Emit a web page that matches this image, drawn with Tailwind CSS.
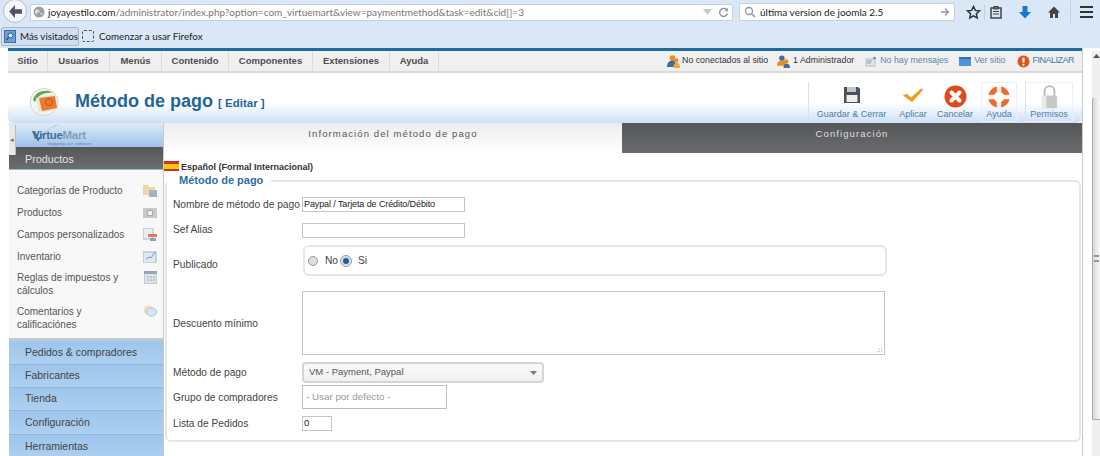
<!DOCTYPE html>
<html lang="es">
<head>
<meta charset="utf-8">
<title>Método de pago</title>
<script src="https://cdn.jsdelivr.net/npm/@tailwindcss/browser@4"></script>
</head>
<body class="w-[1100px] h-[456px] overflow-hidden bg-white font-['Liberation_Sans',Arial,sans-serif] text-[10px] text-[#444]">
<!-- Browser chrome -->
<div class="h-[48px] bg-[#d9e7f6] flex flex-col">
  <div class="h-[24px] flex items-center relative pl-[30px]">
    <div class="absolute left-[3px] top-[-1px] w-[24px] h-[24px] rounded-full bg-[#f5f7fa] border border-[#aebccb] flex items-center justify-center">
      <svg width="15" height="13" viewBox="0 0 14 12"><path d="M6.500 0 1 6l5.500 6V8H13V4H6.500z" fill="#4a5560"/></svg>
    </div>
    <div class="w-[703px] h-[17px] bg-white border border-[#c3d0de] rounded-r-[2px] flex items-center font-['Lato',sans-serif] text-[10px] text-[#777] whitespace-nowrap">
      <svg width="12" height="12" viewBox="0 0 12 12" class="ml-[2px] mr-[3px] shrink-0"><circle cx="6" cy="6" r="5.500" fill="#9aa0a6"/><path d="M3 3.500c2-1 2 1 3 1s1 2-1 2-1 3-2 2-1-3-1-3zM7.500 7c1-.5 2-.5 2 .5s-1 2-1.500 1.500z" fill="#dcdfe2"/></svg>
      <span class="text-[#222]">joyayestilo.com</span><span>/administrator/index.php?option=com_virtuemart&amp;view=paymentmethod&amp;task=edit&amp;cid[]=3</span>
      <div class="ml-auto flex items-center gap-[6px] pr-[3px]">
        <svg width="9" height="6" viewBox="0 0 9 6"><path d="M0 0h9L4.500 6z" fill="#c4ccd3"/></svg>
        <svg width="11" height="11" viewBox="0 0 11 11"><path d="M9 3.200A4 4 0 1 0 9.500 6.500" fill="none" stroke="#8a939b" stroke-width="1.400"/><path d="M9.800.800v3.400H6.400z" fill="#8a939b"/></svg>
      </div>
    </div>
    <div class="ml-[6px] w-[216px] h-[18px] bg-white border border-[#c3d0de] rounded-[2px] flex items-center pl-[4px] pr-[4px] font-['Lato',sans-serif] text-[10px] text-[#222] whitespace-nowrap">
      <svg width="12" height="12" viewBox="0 0 12 12" class="mr-[4px] shrink-0"><circle cx="5" cy="5" r="3.500" fill="none" stroke="#8d959c" stroke-width="1.300"/><path d="m7.700 7.700 3.300 3.300" stroke="#8d959c" stroke-width="1.600"/></svg>
      última version de joomla 2.5
      <svg width="10" height="10" viewBox="0 0 10 10" class="ml-auto"><path d="M1 5h7M5 1.500 8.500 5 5 8.500" fill="none" stroke="#8d959c" stroke-width="1.300"/></svg>
    </div>
    <div class="ml-[11px] flex items-center">
      <svg width="15" height="15" viewBox="0 0 15 15"><path d="m7.500 1.500 1.800 3.900 4.200.5-3.100 2.900.8 4.200-3.700-2.100-3.700 2.100.8-4.200L1.500 5.900l4.200-.5z" fill="none" stroke="#333" stroke-width="1.500"/></svg>
      <div class="w-[1px] h-[15px] bg-[#c3d0de] ml-[3px] mr-[4px]"></div>
      <svg width="14" height="14" viewBox="0 0 14 14"><rect x="2" y="3" width="10" height="10" fill="none" stroke="#444" stroke-width="1.500"/><path d="M5 1.500h4V4H5zM4 6.500h6M4 9h6" fill="none" stroke="#444" stroke-width="1.200"/></svg>
      <svg width="14" height="14" viewBox="0 0 14 14" class="ml-[15px]"><path d="M4.500 1h5v6H13l-6 6.500L1 7h3.500z" fill="#1c78c8"/></svg>
      <svg width="14" height="14" viewBox="0 0 14 14" class="ml-[15px]"><path d="M7 1.500 1 7.500h2V13h3V9h2v4h3V7.500h2z" fill="#444"/></svg>
      <div class="w-[1px] h-[22px] bg-[#c3d0de] ml-[9px] mr-[9px]"></div>
      <div class="flex flex-col gap-[2.500px]"><div class="w-[13px] h-[2.500px] bg-[#333]"></div><div class="w-[13px] h-[2.500px] bg-[#333]"></div><div class="w-[13px] h-[2.500px] bg-[#333]"></div></div>
    </div>
  </div>
  <div class="h-[24px] flex items-center font-['Lato',sans-serif] text-[9.800px] text-[#222]">
    <div class="ml-[1px] h-[19px] w-[78px] shrink-0 bg-[#cfdff0] border border-[#a6b8cb] rounded-[2px] flex items-center pl-[2px] gap-[4px] whitespace-nowrap">
      <svg width="12" height="13" viewBox="0 0 12 13" class="shrink-0"><rect x=".5" y=".5" width="11" height="12" fill="#6f9fd8" stroke="#3e6ea8"/><circle cx="6.500" cy="5.500" r="2.500" fill="#e8f2fb" stroke="#24508a"/><path d="M4.500 7.500 2.500 10" stroke="#24508a" stroke-width="1.300"/></svg>
      Más visitados
    </div>
    <div class="ml-[3px] w-[12px] h-[12px] border border-dashed border-[#555] rounded-[2px]"></div>
    <span class="ml-[5px] whitespace-nowrap">Comenzar a usar Firefox</span>
  </div>
</div>

<div class="h-[408px] flex">
  <!-- Admin page -->
  <div class="ml-[8px] w-[1075px] border-r border-[#c9c9c9] flex flex-col">
    <div class="h-[3px] shrink-0 bg-[#1d6a9f]"></div>
    <!-- top menu -->
    <div class="h-[22px] shrink-0 bg-[#f0f0f0] border-b-2 border-[#d9d9d9] flex items-center justify-between">
      <div class="flex h-full font-bold text-[#4d4d4d] text-[9.500px]">
        <span class="w-[40px] flex items-center justify-center border-r border-[#dcdcdc]">Sitio</span>
        <span class="w-[62px] flex items-center justify-center border-r border-[#dcdcdc]">Usuarios</span>
        <span class="w-[52px] flex items-center justify-center border-r border-[#dcdcdc]">Menús</span>
        <span class="w-[67px] flex items-center justify-center border-r border-[#dcdcdc]">Contenido</span>
        <span class="w-[84px] flex items-center justify-center border-r border-[#dcdcdc]">Componentes</span>
        <span class="w-[77px] flex items-center justify-center border-r border-[#dcdcdc]">Extensiones</span>
        <span class="w-[49px] flex items-center justify-center border-r border-[#dcdcdc]">Ayuda</span>
      </div>
      <div class="flex items-center pr-[8px] text-[8.800px] whitespace-nowrap">
        <svg width="13" height="13" viewBox="0 0 12 12" class="mr-[2px]"><circle cx="5" cy="2.800" r="2.500" fill="#f08a1d"/><path d="M0 11c0-4 2-6 5-6s3 2 3 6z" fill="#3a6ea5"/><circle cx="8.500" cy="5" r="2" fill="#f08a1d"/><path d="M6 12c0-3 1-5 3-5s3 2 3 5z" fill="#f6a33c"/></svg>
        <span class="text-[#333]">No conectados al sitio</span>
        <svg width="13" height="13" viewBox="0 0 12 12" class="ml-[9px] mr-[3px]"><circle cx="4.500" cy="3" r="2.500" fill="#3a6ea5"/><path d="M0 10c0-4 2-5 5-5s3 2 3 5z" fill="#f08a1d"/><circle cx="8.500" cy="6" r="2" fill="#f08a1d"/><path d="M6 12c0-3 1-4 3-4s3 1 3 4z" fill="#3a6ea5"/></svg>
        <span class="text-[#333]">1 Administrador</span>
        <svg width="12" height="11" viewBox="0 0 12 11" class="ml-[11px] mr-[3px]"><rect x="1" y="3" width="9" height="7" fill="#e4e8ec" stroke="#b4bcc4"/><path d="M2 5h5M2 7h4" stroke="#8d98a3"/><path d="M8 1h3v2H8z" fill="#6aa0d8"/></svg>
        <span class="text-[#5b86ad]">No hay mensajes</span>
        <svg width="12" height="9" viewBox="0 0 12 9" class="ml-[11px] mr-[3px]"><rect width="12" height="9" fill="#4e93d6"/><rect width="12" height="2" fill="#2f6fae"/></svg>
        <span class="text-[#5b86ad]">Ver sitio</span>
        <svg width="13" height="13" viewBox="0 0 12 12" class="ml-[12px] mr-[2px]"><circle cx="6" cy="6" r="5.500" fill="#e2501c"/><path d="M6 2.500v4.500" stroke="#fff" stroke-width="2"/><circle cx="6" cy="9" r="1" fill="#fff"/></svg>
        <span class="text-[#3f78ab] text-[9px] tracking-[-0.500px]">FINALIZAR</span>
      </div>
    </div>
    <!-- title header -->
    <div class="h-[50px] shrink-0 bg-gradient-to-b from-white from-60% to-[#cce0f6] rounded-b-[6px] flex items-center relative">
      <div class="ml-[21px] mt-[8px]">
        <svg width="32" height="30" viewBox="0 0 32 30"><ellipse cx="15" cy="15" rx="14" ry="13.500" fill="#f4f4f0" stroke="#d4d4cc"/><path d="M4 13C6 6 12 3 20 4l4 2C16 5 9 8 6 15z" fill="#5cab55"/><path d="M7 11 25 7l4 16-19 3z" fill="#e9e5da"/><path d="M10 11 26 9l2 12-15 3z" fill="#ec7a2f"/><circle cx="20" cy="15" r="3.500" fill="none" stroke="#c5521a"/></svg>
      </div>
      <h1 class="ml-[14px] mt-[7px] text-[18px] font-bold text-[#1f659d] whitespace-nowrap">Método de pago <span class="text-[11.500px]">[ Editar ]</span></h1>
      <div class="ml-auto flex h-[40px] self-start mt-[9px] mr-[9px] text-[#4b7ba8] text-[9px] leading-[11px]">
        <div class="w-[86px] flex flex-col items-center justify-end pb-[2px] whitespace-nowrap border-l border-[#dbe0e5]">
          <svg width="18" height="18" viewBox="0 0 18 18" class="mb-[5px]"><path d="M1 1h14l2 2v14H1z" fill="#4a4f58"/><rect x="4" y="1" width="9" height="5" fill="#c2c5c9"/><rect x="3.500" y="9" width="11" height="7" fill="#eceded"/></svg>
          Guardar &amp; Cerrar
        </div>
        <div class="w-[38px] flex flex-col items-center justify-end pb-[2px]">
          <svg width="22" height="20" viewBox="0 0 24 19" class="mb-[3px]"><path d="M1 9l4-2 5 4L21 1l2 2-12 13z" fill="#f39a1e"/></svg>
          Aplicar
        </div>
        <div class="w-[46px] flex flex-col items-center justify-end pb-[2px]">
          <svg width="23" height="23" viewBox="0 0 23 23" class="mb-[1px]"><circle cx="11.500" cy="11.500" r="11" fill="#df4a1c"/><path d="M7.500 7.500l8 8m0-8-8 8" stroke="#fff" stroke-width="4" stroke-linecap="round"/></svg>
          Cancelar
        </div>
        <div class="ml-[3px] w-[36px] flex flex-col items-center justify-end pb-[1px] border border-[#e8eff7]">
          <svg width="22" height="22" viewBox="0 0 22 22" class="mb-[1px]"><circle cx="11" cy="11" r="8" fill="none" stroke="#ec6a2c" stroke-width="5.500"/><path d="M11 0v6M11 16v6M0 11h6M16 11h6" stroke="#f6f2ee" stroke-width="4.500"/></svg>
          Ayuda
        </div>
        <div class="ml-[8px] w-[48px] flex flex-col items-center justify-end pb-[1px] border border-[#e8eff7] border-l-[#dbe0e5]">
          <svg width="17" height="25" viewBox="0 0 19 26"><path d="M4 13V7a5.500 5.500 0 0 1 11 0v6" fill="none" stroke="#b8b8b8" stroke-width="2"/><rect x="1" y="12" width="17" height="14" rx="1.500" fill="#c8c8c4"/><rect x="1" y="12" width="5" height="14" fill="#eaeae6"/></svg>
          Permisos
        </div>
      </div>
    </div>
    <!-- body -->
    <div class="h-[333px] flex min-h-0 overflow-hidden">
      <!-- sidebar -->
      <aside class="w-[155px] ml-[1px] shrink-0 border-r border-[#c8c8c8] flex flex-col relative overflow-hidden">
        <div class="absolute z-10 left-0 top-[2px] w-[7px] h-[30px] bg-[#e9e9e9] border-r border-[#bbb] flex items-center justify-center text-[7px] text-[#666]">◂</div>
        <div class="h-[24px] shrink-0 relative bg-gradient-to-b from-[#dfeaf6] to-[#9cc3ea] pl-[23px] pt-[5px] font-bold text-[11.500px] leading-[14px] text-[#3f6f9c] tracking-[-0.3px] whitespace-nowrap">Virtue<span class="text-[#7f9fc0]">Mart</span>
          <svg width="30" height="19" viewBox="0 0 30 19" class="absolute left-[23px] top-[1px]"><path d="M1 7l5 11C10 10 18 3 28 0 18 4 11 9 6.500 14L3 7z" fill="#3f6f9c"/></svg>
          <span class="absolute left-[38px] top-[18px] text-[4px] leading-[5px] font-normal tracking-[0.2px] text-[#5a7a99]">shopping cart software</span>
        </div>
        <div class="h-[23px] shrink-0 bg-gradient-to-b from-[#555658] to-[#6c6d70] border-b border-[#9bb] pl-[16px] pt-[2px] flex items-center text-[10.800px] text-[#e2e2e2]">Productos</div>
        <div class="h-[170px] shrink-0 bg-[#f8f8f8] border-b-2 border-[#c9c9c9] pl-[8px] pr-[6px] pt-[14px] text-[10px] leading-[13px] text-[#555] flex flex-col">
          <div class="h-[22px] shrink-0 flex justify-between items-start"><span>Categorías de Producto</span>
            <svg width="14" height="13" viewBox="0 0 14 13"><path d="M0 1h5l1 2h6v8H0z" fill="#f0d5a0"/><rect x="6" y="6" width="8" height="7" fill="#9eb4c8"/></svg></div>
          <div class="h-[22px] shrink-0 flex justify-between items-start"><span>Productos</span>
            <svg width="14" height="12" viewBox="0 0 14 12"><rect y="2" width="14" height="10" fill="#c9c9c9"/><circle cx="7" cy="7" r="3" fill="#eee" stroke="#999"/></svg></div>
          <div class="h-[22px] shrink-0 flex justify-between items-start"><span>Campos personalizados</span>
            <svg width="14" height="13" viewBox="0 0 14 13"><rect width="10" height="11" fill="#e8eef4" stroke="#b0bcc8"/><path d="M5 6h9v3H5z" fill="#e77b4b"/><path d="M7 10h6v3H7z" fill="#7ba6d0"/></svg></div>
          <div class="h-[21px] shrink-0 flex justify-between items-start"><span>Inventario</span>
            <svg width="14" height="13" viewBox="0 0 14 13"><rect y="2" width="13" height="11" fill="#dfeaf5" stroke="#9ab6d2"/><path d="M3 9l3-2 2 1 4-6" fill="none" stroke="#7b93aa"/></svg></div>
          <div class="h-[34px] shrink-0 flex justify-between items-start"><span>Reglas de impuestos y<br>cálculos</span>
            <svg width="13" height="13" viewBox="0 0 13 13"><rect width="13" height="13" fill="#dfe4ea" stroke="#a8b2bc"/><rect width="13" height="3" fill="#8ea7bf"/><path d="M3 6h2M6 6h2M9 6h2M3 9h2M6 9h2M9 9h2" stroke="#9aa5b0"/></svg></div>
          <div class="flex justify-between items-start"><span>Comentarios y<br>calificaciónes</span>
            <svg width="14" height="13" viewBox="0 0 14 13"><ellipse cx="5.500" cy="5" rx="5" ry="4.500" fill="#f3dcb0"/><ellipse cx="8.500" cy="7" rx="5" ry="4" fill="#d5e7f6" stroke="#8fb6da" stroke-width=".7"/></svg></div>
        </div>
        <div class="flex-1 pt-[2px] bg-[#a6c9ec] text-[10.500px] text-[#444] flex flex-col">
          <div class="h-[23px] shrink-0 pl-[16px] flex items-center border-b border-[#8fb5db] bg-gradient-to-b from-[#9ec5ec] to-[#add0f0]">Pedidos &amp; compradores</div>
          <div class="h-[23px] shrink-0 pl-[16px] flex items-center border-b border-[#8fb5db] bg-gradient-to-b from-[#9ec5ec] to-[#add0f0]">Fabricantes</div>
          <div class="h-[23px] shrink-0 pl-[16px] flex items-center border-b border-[#8fb5db] bg-gradient-to-b from-[#9ec5ec] to-[#add0f0]">Tienda</div>
          <div class="h-[24px] shrink-0 pl-[16px] flex items-center border-b border-[#8fb5db] bg-gradient-to-b from-[#9ec5ec] to-[#add0f0]">Configuración</div>
          <div class="h-[23px] shrink-0 pl-[16px] flex items-center bg-gradient-to-b from-[#9ec5ec] to-[#add0f0]">Herramientas</div>
        </div>
      </aside>
      <!-- main -->
      <main class="flex-1 min-w-0 flex flex-col">
        <div class="h-[30px] flex shrink-0 text-[9.500px] tracking-[1.100px]">
          <div class="w-[458px] bg-gradient-to-b from-[#ececec] to-white flex justify-center pt-[4px] text-[#555]">Información del método de pago</div>
          <div class="flex-1 bg-gradient-to-b from-[#555658] to-[#6b6c6f] flex justify-center pt-[4px] text-[#dedede]">Configuración</div>
        </div>
        <div class="h-[27px] shrink-0 flex items-start pt-[8px] font-bold text-[9px] text-[#333] leading-[12px]">
          <div class="w-[15px] h-[10px] mr-[2px] shrink-0 flex flex-col"><div class="h-[2.500px] bg-[#d0321f]"></div><div class="h-[5px] bg-[#f6c814]"></div><div class="h-[2.500px] bg-[#d0321f]"></div></div>
          Español (Formal Internacional)
        </div>
        <!-- form frame -->
        <div class="relative ml-[1px] mr-[1px] h-[262px] shrink-0 border-2 border-[#e6e6e6] rounded-[6px] pt-[15px] pl-[6px] text-[10.200px] text-[#444]">
          <div class="absolute left-0 top-[-9px] bg-white pl-[12px] pr-[8px] font-bold text-[#2f6ea5] text-[11px] leading-[14px]">Método de pago</div>
          <div class="h-[15px] flex items-center"><label class="w-[129px] shrink-0 whitespace-nowrap">Nombre de método de pago</label>
            <div class="w-[163px] h-[15px] border border-[#c5c5c5] flex items-center pl-[1px] text-[9px] tracking-[-0.100px] text-[#222]">Paypal / Tarjeta de Crédito/Débito</div></div>
          <div class="h-[15px] mt-[11px] flex items-center"><label class="w-[129px] shrink-0 mt-[-1px]">Sef Alias</label>
            <div class="w-[163px] h-[15px] border border-[#c5c5c5]"></div></div>
          <div class="h-[31px] mt-[7px] flex items-center"><label class="w-[130px] shrink-0 mt-[9px]">Publicado</label>
            <div class="w-[584px] h-[31px] border-2 border-[#e6e6e6] rounded-[6px] flex items-center pl-[3px] text-[#444]">
              <span class="w-[10px] h-[10px] rounded-full bg-[#ddd] border border-[#999]"></span>
              <span class="ml-[7px]">No</span>
              <span class="ml-[3px] w-[10px] h-[10px] rounded-full bg-[#1d5f9e] border-[2px] border-[#ddd] outline outline-1 outline-[#999]"></span>
              <span class="ml-[7px]">Si</span>
            </div></div>
          <div class="h-[64px] mt-[15px] flex items-center"><label class="w-[129px] shrink-0 mt-[2px]">Descuento mínimo</label>
            <div class="w-[583px] h-[64px] border border-[#c5c5c5] relative">
              <svg width="7" height="7" viewBox="0 0 7 7" class="absolute right-[1px] bottom-[1px]"><path d="M5 1h1v1H5zM3 3h1v1H3zM5 3h1v1H5zM1 5h1v1H1zM3 5h1v1H3zM5 5h1v1H5z" fill="#bbb"/></svg>
            </div></div>
          <div class="h-[21px] mt-[7px] flex items-center"><label class="w-[129px] shrink-0">Método de pago</label>
            <div class="w-[242px] h-[21px] border-2 border-[#d5d5d5] rounded-[4px] bg-gradient-to-b from-[#fafafa] to-[#f0f0f0] flex items-center justify-between pl-[5px] pr-[5px] text-[9.500px] text-[#555]">VM - Payment, Paypal
              <svg width="7" height="4" viewBox="0 0 7 4"><path d="M0 0h7L3.500 4z" fill="#777"/></svg></div></div>
          <div class="h-[24px] mt-[2px] flex items-center"><label class="w-[129px] shrink-0 mt-[1px]">Grupo de compradores</label>
            <div class="w-[145px] h-[24px] border border-[#bdbdbd] flex items-center pl-[3px] text-[9.800px] text-[#999]">- Usar por defecto -</div></div>
          <div class="h-[15px] mt-[7px] flex items-center"><label class="w-[129px] shrink-0">Lista de Pedidos</label>
            <div class="w-[30px] h-[15px] border border-[#c5c5c5] flex items-center pl-[1px] text-[9.500px] text-[#222]">0</div></div>
        </div>
      </main>
    </div>
  </div>
  <!-- Scrollbar -->
  <div class="ml-[9px] w-[8px] mt-[3px] bg-[#efefef] flex flex-col items-center">
    <svg width="7" height="4" viewBox="0 0 7 4" class="mt-[3px]"><path d="M3.500 0 7 4H0z" fill="#555"/></svg>
    <div class="mt-[40px] w-[8px] h-[322px] bg-gradient-to-r from-[#d8d8d8] to-[#f8f8f8] border-l border-b border-[#a8a8a8] rounded-bl-[2px] flex items-center justify-center">
      <div class="w-[5px] h-[7px] border-y-[2px] border-[#999]"></div>
    </div>
  </div>
</div>
</body>
</html>
